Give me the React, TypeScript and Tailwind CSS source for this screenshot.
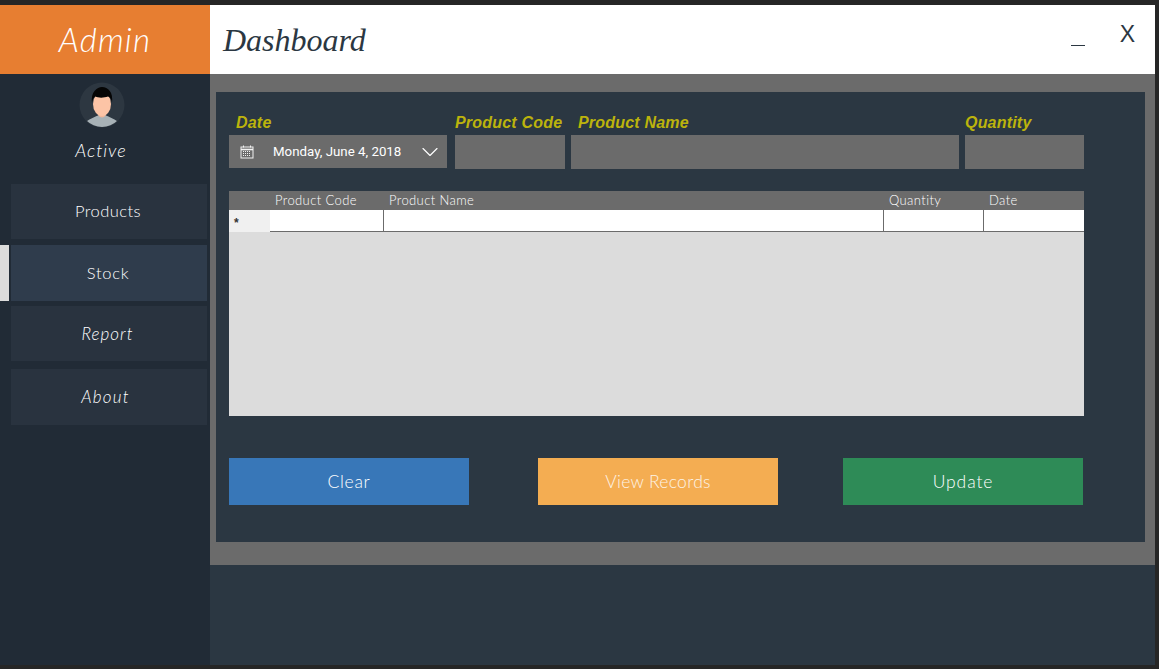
import React from "react"
import { ChevronDown } from "lucide-react"

const gothic = "font-['Lato','Open_Sans',sans-serif]"

const NAV = [
  { label: "Products", italic: false, active: false, cls: "h-[55px] mt-[10px]", text: "pr-[2px] text-[16.5px] tracking-[0.45px]" },
  { label: "Stock", italic: false, active: true, cls: "h-[56px] mt-[6px]", text: "pr-[2px] text-[16.5px] tracking-[0.7px]" },
  { label: "Report", italic: true, active: false, cls: "h-[55px] mt-[5px]", text: "pr-[3px] text-[17px] tracking-[1px]" },
  { label: "About", italic: true, active: false, cls: "h-[56px] mt-[8px]", text: "pr-[7px] text-[17px] tracking-[1.2px]" },
]

function Avatar() {
  return (
    <svg width={46} height={46} viewBox="0 0 46 46" className="block">
      <defs>
        <clipPath id="avatar-clip">
          <circle cx={23} cy={23} r={22} />
        </clipPath>
      </defs>
      <circle cx={23} cy={23} r={22.5} fill="#2d3741" />
      <g clipPath="url(#avatar-clip)">
        <path d="M5 42 C9 37 16 35 20 33 L26 33 C30 35 37 37 41 42 L41 46 L5 46 Z" fill="#a7b1b6" />
        <path d="M19.5 28 L26.5 28 L26.5 33.5 C25 36 21 36 19.5 33.5 Z" fill="#f2b79a" />
        <ellipse cx={23} cy={22} rx={9} ry={12} fill="#fcc4a6" />
        <path d="M13 21 C11.5 10 18 5 23 5 C29 5 34.5 10 33 21 C32.5 17 31 15 29 14.5 C25 16 19 16 16.5 14.5 C14.5 15.5 13.5 17.5 13 21 Z" fill="#050505" />
      </g>
    </svg>
  )
}

function CalendarIcon() {
  return (
    <svg width={14} height={14} viewBox="0 0 14 14" fill="none" className="block">
      <rect x={1} y={2} width={12} height={11} stroke="#f2f2f2" strokeWidth={1} />
      <path d="M1 4.5H13" stroke="#f2f2f2" strokeWidth={1.6} />
      <path d="M3.5 0.5V2.5M10.5 0.5V2.5" stroke="#f2f2f2" strokeWidth={1} />
      <path d="M3 6.5H11M3 8.5H11M3 10.5H11" stroke="#f2f2f2" strokeWidth={1} strokeDasharray="1 1" />
    </svg>
  )
}

function FieldLabel({ children, className }: { children: React.ReactNode; className: string }) {
  return (
    <div className={`h-[20px] pt-[1px] text-[16px] leading-[20px] font-bold italic tracking-[0.2px] text-[#bcb30c] font-['Liberation_Sans',sans-serif] ${className}`}>
      {children}
    </div>
  )
}

function ActionButton({ label, cls }: { label: string; cls: string }) {
  return (
    <button type="button" className={`h-[47px] w-[240px] pt-[2px] text-[17.5px] font-light ${gothic} ${cls}`}>
      {label}
    </button>
  )
}

export default function App() {
  return (
    <div className="flex h-[669px] w-[1159px] overflow-hidden bg-[#262626] pt-[5px] pr-[4px] pb-[4px]">
      {/* Sidebar */}
      <aside className="flex h-full w-[210px] flex-shrink-0 flex-col bg-[#212b36]">
        <div className={`flex h-[69px] items-center justify-center bg-[#e77e31] text-[33px] font-light italic tracking-[1.2px] text-white ${gothic}`}>
          Admin
        </div>
        <div className="mt-[8px] flex justify-center pr-[6px]">
          <Avatar />
        </div>
        <div className={`mt-[10px] pr-[8px] text-center text-[18px] leading-[24px] font-light italic tracking-[1px] text-white ${gothic}`}>
          Active
        </div>
        <nav className="mt-[12px] flex flex-col">
          {NAV.map((item) => (
            <div key={item.label} className={`flex ${item.cls}`}>
              <div className={`w-[9px] flex-shrink-0 ${item.active ? "bg-[#dcdcdc]" : ""}`} />
              <div
                className={`ml-[2px] flex w-[196px] items-center justify-center font-light text-white ${gothic} ${item.text} ${
                  item.active ? "bg-[#2f3c4c]" : "bg-[#29333f]"
                } ${item.italic ? "italic" : ""}`}
              >
                {item.label}
              </div>
            </div>
          ))}
        </nav>
      </aside>

      {/* Main */}
      <main className="flex h-full min-w-0 flex-1 flex-col bg-[#2b3742]">
        <header className="flex h-[69px] flex-shrink-0 items-start bg-white">
          <h1 className="ml-[13px] mt-[15px] text-[32px] leading-[40px] italic text-[#2b3742] font-['Liberation_Serif',serif]">
            Dashboard
          </h1>
          <div className="ml-auto mr-[20px] mt-[14px] flex items-start">
            <div className="mt-[12px] mr-[35px] h-[15px] w-[14px] border-b border-[#2b3742]" />
            <div className="text-[23px] leading-[30px] font-light text-[#2b3742] font-['Liberation_Sans',sans-serif]">X</div>
          </div>
        </header>

        <div className="h-[491px] flex-shrink-0 bg-[#6b6b6b] px-[6px] pt-[18px] pr-[10px]">
          <section className="h-[450px] bg-[#2b3742] pl-[13px] pt-[20px]">
            {/* Form labels */}
            <div className="flex">
              <FieldLabel className="w-[226px] pl-[7px]">Date</FieldLabel>
              <FieldLabel className="w-[116px]">Product Code</FieldLabel>
              <FieldLabel className="w-[394px] pl-[7px]">Product Name</FieldLabel>
              <FieldLabel className="w-[119px]">Quantity</FieldLabel>
            </div>

            {/* Form fields */}
            <div className="mt-[3px] flex h-[34px] items-start">
              <div className="flex h-[33px] w-[218px] items-center bg-[#6b6b6b] pl-[11px] text-white">
                <CalendarIcon />
                <span className="ml-[19px] w-[128px] whitespace-nowrap text-[13.3px] font-['Roboto',sans-serif]">Monday, June 4, 2018</span>
                <ChevronDown size={28} strokeWidth={1} className="ml-[15px] text-white" />
              </div>
              <div className="ml-[8px] h-[34px] w-[110px] bg-[#6b6b6b]" />
              <div className="ml-[6px] h-[34px] w-[388px] bg-[#6b6b6b]" />
              <div className="ml-[6px] h-[34px] w-[119px] bg-[#6b6b6b]" />
            </div>

            {/* Grid */}
            <div className="mt-[22px] flex h-[225px] w-[855px] flex-col bg-[#dcdcdc]">
              <div className={`flex h-[19px] bg-[#6b6b6b] text-[13px] leading-[19px] font-light tracking-[0.4px] text-white ${gothic}`}>
                <div className="w-[41px]" />
                <div className="w-[114px] pl-[5px]">Product Code</div>
                <div className="w-[500px] pl-[5px]">Product Name</div>
                <div className="w-[100px] pl-[5px]">Quantity</div>
                <div className="w-[100px] pl-[5px]">Date</div>
              </div>
              <div className="flex h-[22px]">
                <div className="w-[41px] bg-[#f0f0f0] pl-[5px] pt-[6px] text-[12px] leading-[14px] font-bold text-[#333] font-['Liberation_Sans',sans-serif]">*</div>
                <div className="w-[114px] border-r border-b border-[#6b6b6b] bg-white" />
                <div className="w-[500px] border-r border-b border-[#6b6b6b] bg-white" />
                <div className="w-[100px] border-r border-b border-[#6b6b6b] bg-white" />
                <div className="w-[100px] border-b border-[#6b6b6b] bg-white" />
              </div>
            </div>

            {/* Actions */}
            <div className="mt-[42px] flex text-white">
              <ActionButton label="Clear" cls="bg-[#3877b8] tracking-[0.7px] text-white" />
              <ActionButton label="View Records" cls="ml-[69px] bg-[#f4ad52] tracking-[0.3px] text-[#fdf3e6]" />
              <ActionButton label="Update" cls="ml-[65px] bg-[#2e8b57] tracking-[0.9px] text-white" />
            </div>
          </section>
        </div>
      </main>
    </div>
  )
}
